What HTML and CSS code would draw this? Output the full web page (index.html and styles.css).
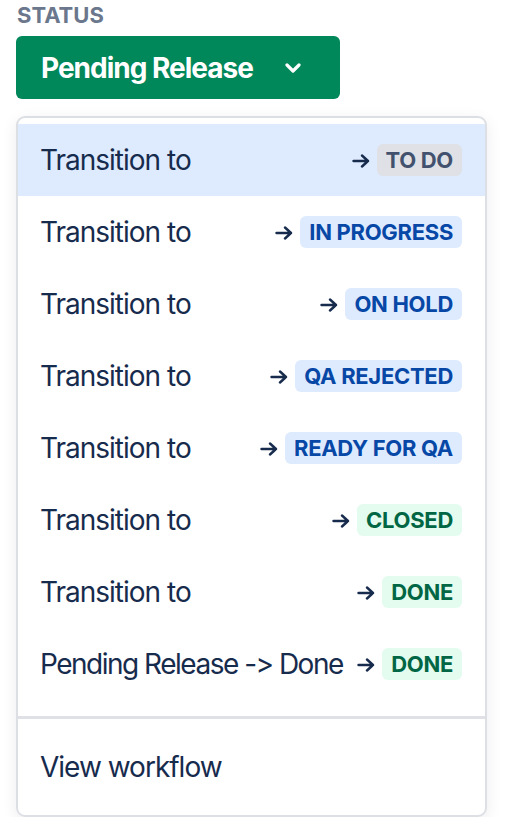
FILE: index.html
```html
<!DOCTYPE html>
<html>
<head>
<meta charset="utf-8">
<link rel="stylesheet" href="styles.css">
</head>
<body>
<div class="field">
  <div class="label">STATUS</div>
  <button class="status-btn">
    <span class="status-text">Pending Release</span>
    <svg class="chev" width="16" height="10" viewBox="0 0 16 10"><path d="M2 2 L8 8 L14 2" fill="none" stroke="#fff" stroke-width="3.2" stroke-linecap="round" stroke-linejoin="round"/></svg>
  </button>
  <div class="menu">
    <div class="group">
      <div class="item active"><span class="name">Transition to</span><span class="target"><svg class="arrow" width="18" height="14" viewBox="0 0 18 14"><path d="M1.5 7 H16 M10 1.5 L16 7 L10 12.5" fill="none" stroke="#172b4d" stroke-width="2.4" stroke-linecap="round" stroke-linejoin="round"/></svg><span class="loz grey">TO DO</span></span></div>
      <div class="item"><span class="name">Transition to</span><span class="target"><svg class="arrow" width="18" height="14" viewBox="0 0 18 14"><path d="M1.5 7 H16 M10 1.5 L16 7 L10 12.5" fill="none" stroke="#172b4d" stroke-width="2.4" stroke-linecap="round" stroke-linejoin="round"/></svg><span class="loz blue">IN PROGRESS</span></span></div>
      <div class="item"><span class="name">Transition to</span><span class="target"><svg class="arrow" width="18" height="14" viewBox="0 0 18 14"><path d="M1.5 7 H16 M10 1.5 L16 7 L10 12.5" fill="none" stroke="#172b4d" stroke-width="2.4" stroke-linecap="round" stroke-linejoin="round"/></svg><span class="loz blue">ON HOLD</span></span></div>
      <div class="item"><span class="name">Transition to</span><span class="target"><svg class="arrow" width="18" height="14" viewBox="0 0 18 14"><path d="M1.5 7 H16 M10 1.5 L16 7 L10 12.5" fill="none" stroke="#172b4d" stroke-width="2.4" stroke-linecap="round" stroke-linejoin="round"/></svg><span class="loz blue">QA REJECTED</span></span></div>
      <div class="item"><span class="name">Transition to</span><span class="target"><svg class="arrow" width="18" height="14" viewBox="0 0 18 14"><path d="M1.5 7 H16 M10 1.5 L16 7 L10 12.5" fill="none" stroke="#172b4d" stroke-width="2.4" stroke-linecap="round" stroke-linejoin="round"/></svg><span class="loz blue">READY FOR QA</span></span></div>
      <div class="item"><span class="name">Transition to</span><span class="target"><svg class="arrow" width="18" height="14" viewBox="0 0 18 14"><path d="M1.5 7 H16 M10 1.5 L16 7 L10 12.5" fill="none" stroke="#172b4d" stroke-width="2.4" stroke-linecap="round" stroke-linejoin="round"/></svg><span class="loz green">CLOSED</span></span></div>
      <div class="item"><span class="name">Transition to</span><span class="target"><svg class="arrow" width="18" height="14" viewBox="0 0 18 14"><path d="M1.5 7 H16 M10 1.5 L16 7 L10 12.5" fill="none" stroke="#172b4d" stroke-width="2.4" stroke-linecap="round" stroke-linejoin="round"/></svg><span class="loz green">DONE</span></span></div>
      <div class="item"><span class="name long">Pending Release -&gt; Done</span><span class="target tight"><svg class="arrow" width="18" height="14" viewBox="0 0 18 14"><path d="M1.5 7 H16 M10 1.5 L16 7 L10 12.5" fill="none" stroke="#172b4d" stroke-width="2.4" stroke-linecap="round" stroke-linejoin="round"/></svg><span class="loz green">DONE</span></span></div>
    </div>
    <div class="group last">
      <div class="item"><span class="name">View workflow</span></div>
    </div>
  </div>
</div>
</body>
</html>
```
FILE: styles.css
```css
html, body {
  margin: 0;
  padding: 0;
  background: #fff;
}
body {
  font-family: Inter, "Noto Sans", sans-serif;
  font-feature-settings: "calt" 0, "liga" 0;
  font-variant-ligatures: none;
  color: #172b4d;
}
.field {
  padding: 0 16px;
}
.label {
  font-size: 22px;
  font-weight: 700;
  color: #6b778c;
  line-height: 30px;
  height: 30px;
  padding-left: 1px;
}
.status-btn {
  margin-top: 6px;
  width: 324px;
  height: 63px;
  border: 0;
  border-radius: 6px;
  background: #00875a;
  color: #fff;
  display: flex;
  align-items: center;
  padding: 0 0 0 25px;
  font-family: inherit;
  font-size: 28px;
  font-weight: 700;
  cursor: pointer;
}
.status-text {
  letter-spacing: -1px;
}
.chev {
  margin-left: 32px;
}
.menu {
  margin-top: 17px;
  width: 471px;
  height: 701px;
  box-sizing: border-box;
  border: 2px solid #dcdfe4;
  border-radius: 9px;
  box-shadow: 0 4px 16px rgba(9, 30, 66, 0.08);
  overflow: hidden;
  display: flex;
  flex-direction: column;
}
.group {
  padding: 6px 0 16px;
  border-bottom: 3px solid #dfe1e6;
}
.group.last {
  border-bottom: 0;
  padding: 12px 0;
}
.item {
  height: 72px;
  display: flex;
  align-items: center;
  justify-content: space-between;
  padding: 0 23px 0 22px;
  font-size: 28px;
  line-height: 32px;
  white-space: nowrap;
}
.name {
  letter-spacing: -1px;
}
.name.long {
  letter-spacing: -1.5px;
}
.item.active {
  background: #deebff;
}
.target {
  display: flex;
  align-items: center;
}
.arrow {
  display: block;
  margin-right: 7px;
  margin-top: 1px;
}
.target.tight .arrow {
  margin-left: 4px;
}
.loz {
  height: 32px;
  line-height: 32px;
  padding: 0 9px;
  border-radius: 6px;
  font-size: 22px;
  font-weight: 700;
  letter-spacing: -0.3px;
}
.loz.grey {
  background: #dfe1e6;
  color: #42526e;
}
.loz.blue {
  background: #deebff;
  color: #0747a6;
}
.loz.green {
  background: #e3fcef;
  color: #006644;
}
```
